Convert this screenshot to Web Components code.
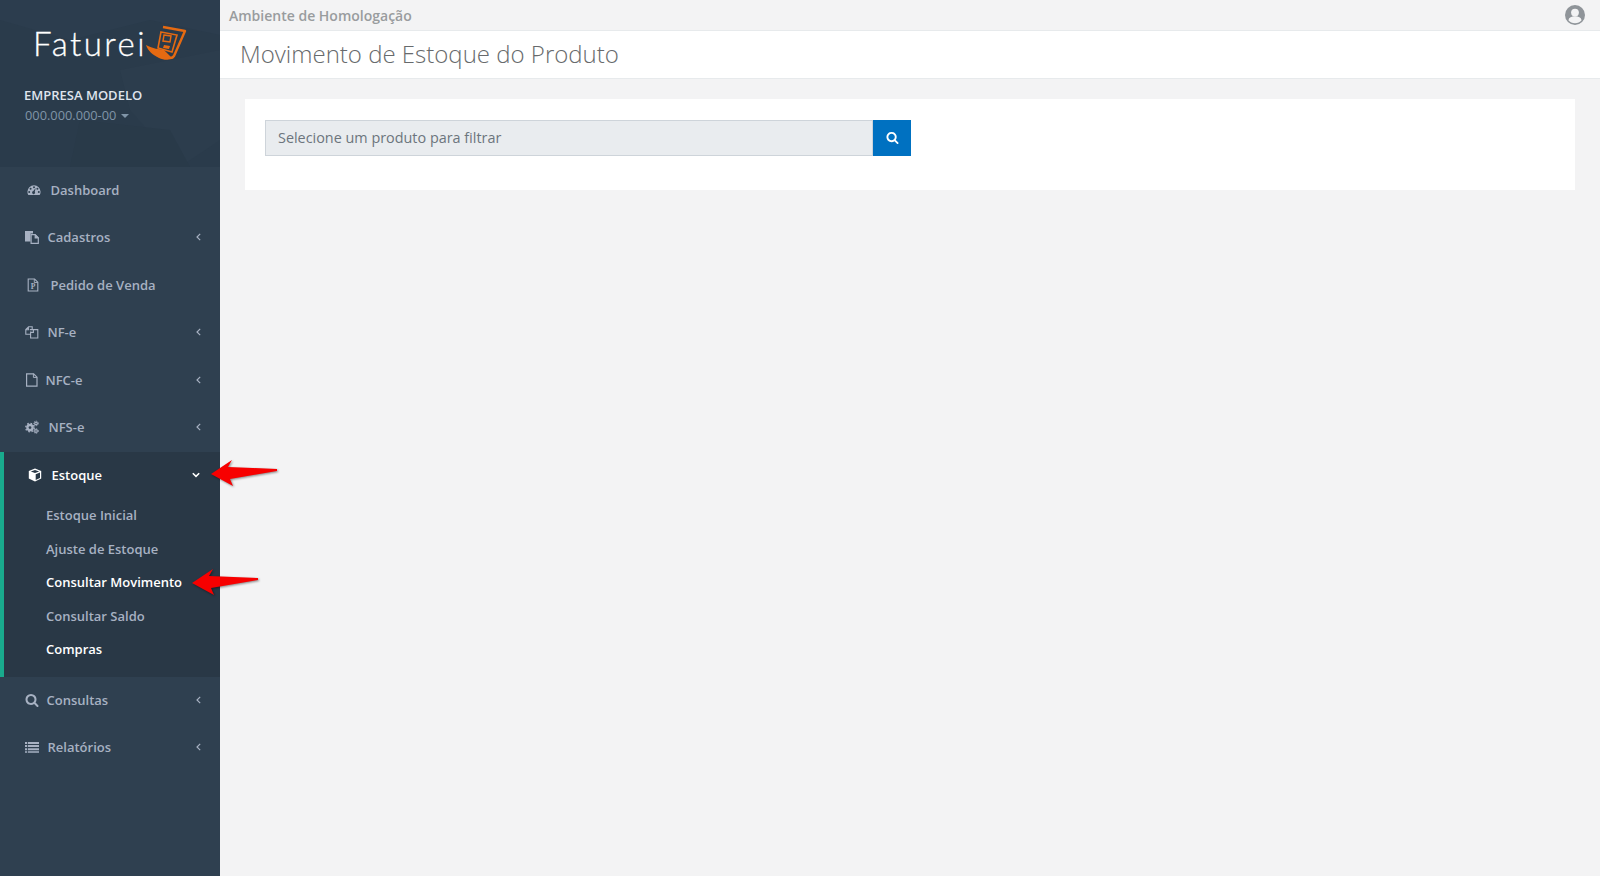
<!DOCTYPE html>
<html lang="pt-BR">
<head>
<meta charset="utf-8">
<title>Movimento de Estoque do Produto</title>
<style>
  html, body { margin: 0; height: 100%; overflow: hidden; background: #f3f3f4; }
  body { font-family: "Open Sans", "Liberation Sans", sans-serif; }
</style>
</head>
<body>
<app-shell>
  <side-bar slot="side">
    <brand-header slot="brand"></brand-header>
    <nav-item icon="dashboard" icon-x="1.5" label-x="25.5">Dashboard</nav-item>
    <nav-item icon="paste" label-x="22.5" arrow>Cadastros</nav-item>
    <nav-item icon="order" icon-x="1" label-x="25.5">Pedido de Venda</nav-item>
    <nav-item icon="files" label-x="22.5" arrow>NF-e</nav-item>
    <nav-item icon="file" label-x="20.5" arrow>NFC-e</nav-item>
    <nav-item icon="cogs" label-x="23.5" arrow>NFS-e</nav-item>
    <nav-group>
      <nav-item slot="head" icon="cube" icon-x="3" label-x="26.5" arrow open>Estoque</nav-item>
      <sub-item>Estoque Inicial</sub-item>
      <sub-item>Ajuste de Estoque</sub-item>
      <sub-item active>Consultar Movimento</sub-item>
      <sub-item>Consultar Saldo</sub-item>
      <sub-item active>Compras</sub-item>
    </nav-group>
    <nav-item icon="search" label-x="21.5" arrow>Consultas</nav-item>
    <nav-item icon="list" label-x="22.5" arrow>Relatórios</nav-item>
  </side-bar>
  <top-bar>Ambiente de Homologação</top-bar>
  <page-heading>Movimento de Estoque do Produto</page-heading>
  <filter-card placeholder="Selecione um produto para filtrar"></filter-card>
  <red-arrow style="left:211px;top:458px"></red-arrow>
  <red-arrow style="left:192px;top:567px"></red-arrow>
</app-shell>

<script>
const SEARCH_PATH = 'M1216 832q0-185-131.5-316.5t-316.5-131.5-316.5 131.5-131.5 316.5 131.5 316.5 316.5 131.5 316.5-131.5 131.5-316.5zm512 832q0 52-38 90t-90 38q-54 0-90-38l-343-342q-179 124-399 124-143 0-273.5-55.5t-225-150-150-225-55.5-273.5 55.5-273.5 150-225 225-150 273.5-55.5 273.5 55.5 225 150 150 225 55.5 273.5q0 220-124 399l343 343q37 37 37 90z';

const ICONS = {
  dashboard: `<svg viewBox="0 0 14 14" width="14" height="14"><path fill="currentColor" fill-rule="evenodd" d="M7 2.2a6.6 6.6 0 0 1 6.6 6.600c0 1.200-.3 2.300-.9 3.200H1.300A6.600 6.600 0 0 1 .4 8.800 6.600 6.600 0 0 1 7 2.200zM7 3.300a1 1 0 1 0 0 2 1 1 0 0 0 0-2zM3.600 4.700a1 1 0 1 0 0 2 1 1 0 0 0 0-2zM2.200 8a1 1 0 1 0 0 2 1 1 0 0 0 0-2zM11.800 8a1 1 0 1 0 0 2 1 1 0 0 0 0-2zM10.400 4.700a1 1 0 1 0 0 2 1 1 0 0 0 0-2zM8.700 4.900 6.300 8.100a1.500 1.500 0 1 0 1.500.6z"/></svg>`,
  paste: `<svg viewBox="0 0 14 14" width="14" height="14"><path fill="currentColor" d="M0 1h8v2.500H5.500v8H0z"/><path fill="none" stroke="currentColor" stroke-width="1.200" d="M6.100 4.600h4l3.200 3.200v5.600H6.100z"/><path fill="currentColor" d="M9.600 4.500h1l3 3v1H9.600z"/></svg>`,
  order: `<svg viewBox="0 0 14 14" width="14" height="14"><path fill="none" stroke="currentColor" stroke-width="1.100" d="M2.200 1h6.400l3.200 3.200v8.800H2.200z"/><path fill="none" stroke="currentColor" stroke-width=".9" d="M8.300 1v3.500h3.500"/><text x="7" y="11.200" text-anchor="middle" font-family="Liberation Serif, serif" font-size="7.500" font-weight="700" fill="currentColor">P</text></svg>`,
  files: `<svg viewBox="0 0 14 14" width="14" height="14"><path fill="none" stroke="currentColor" stroke-width="1.100" d="M5.600 9.300H.8V4.600L3.600 1.800H7.200V4M4.800 4.600H12.800V13H5.600V6.600M3.400 2v2.700H.8M8.400 4.800v2.600H5.700"/></svg>`,
  file: `<svg viewBox="0 0 14 14" width="14" height="14"><path fill="none" stroke="currentColor" stroke-width="1.200" d="M1.600 .8h7l3.400 3.400v9H1.600z"/><path fill="none" stroke="currentColor" stroke-width="1" d="M8.400 .8v3.600h3.600"/></svg>`,
  cogs: `<svg viewBox="0 0 14 14" width="14" height="14"><g fill="none" stroke="currentColor"><circle cx="5" cy="7.600" r="2.600" stroke-width="2.400"/><circle cx="5" cy="7.600" r="4.200" stroke-width="1.500" stroke-dasharray="1.600 1.700"/><circle cx="11" cy="3.400" r="1.300" stroke-width="1.200"/><circle cx="11" cy="3.400" r="2.300" stroke-width="1" stroke-dasharray="1 1"/><circle cx="11" cy="11" r="1.300" stroke-width="1.200"/><circle cx="11" cy="11" r="2.300" stroke-width="1" stroke-dasharray="1 1"/></g></svg>`,
  cube: `<svg viewBox="0 0 14 14" width="14" height="14"><path fill="currentColor" d="M7 .6 13.200 2.900v7.700L7 13.600.8 10.600V2.900z"/><path fill="#293846" d="M7 1.900 2.800 3.400 7 5l4.200-1.600zM7.700 6.200v5.900l4.300-2.200V4.600z"/></svg>`,
  search: `<svg viewBox="0 0 1792 1792" width="14" height="14"><path fill="currentColor" d="${SEARCH_PATH}"/></svg>`,
  list: `<svg viewBox="0 0 14 14" width="14" height="14"><path fill="currentColor" d="M0 2h2.200v2H0zM0 5.100h2.200v2H0zM0 8.200h2.200v2H0zM0 11.200h2.200v1.600H0zM3 2h11v2H3zM3 5.100h11v2H3zM3 8.200h11v2H3zM3 11.200h11v1.600H3z"/></svg>`
};

class AppShell extends HTMLElement {
  constructor() {
    super();
    this.attachShadow({ mode: 'open' });
    this.shadowRoot.innerHTML = `
      <style>
        :host {
          display: grid;
          grid-template-columns: 220px 1fr;
          height: 876px;
          position: relative;
          overflow: hidden;
        }
        .main { display: flex; flex-direction: column; min-width: 0; }
      </style>
      <slot name="side"></slot>
      <div class="main"><slot></slot></div>
    `;
  }
}

class SideBar extends HTMLElement {
  constructor() {
    super();
    this.attachShadow({ mode: 'open' });
    this.shadowRoot.innerHTML = `
      <style>
        :host { display: block; background: #2f4050; height: 100%; }
      </style>
      <slot name="brand"></slot>
      <slot></slot>
    `;
  }
}

class BrandHeader extends HTMLElement {
  constructor() {
    super();
    this.attachShadow({ mode: 'open' });
    this.shadowRoot.innerHTML = `
      <style>
        :host {
          display: block;
          position: relative;
          height: 167px;
          background: #2a3b4b;
          overflow: hidden;
        }
        .facets { position: absolute; inset: 0; }
        .content { position: relative; padding: 24px 0 0 24px; }
        .logo { display: flex; align-items: center; height: 38px; margin-left: 9px; }
        .word {
          font: 300 33px/38px Lato, sans-serif;
          color: #fff;
          letter-spacing: 2.5px;
          -webkit-text-stroke: .3px #fff;
        }
        .mark { margin-left: -2px; flex: none; }
        .company {
          margin-top: 24px;
          font-size: 13px;
          line-height: 18px;
          font-weight: 600;
          color: #dfe4ed;
        }
        .doc {
          display: flex;
          align-items: center;
          margin: 3px 0 0 1px;
          font-size: 12.8px;
          line-height: 17px;
          color: #8095a8;
        }
        .caret {
          width: 0; height: 0;
          margin-left: 5px;
          border: 4px solid transparent;
          border-top-color: #8095a8;
          border-bottom: 0;
        }
      </style>
      <svg class="facets" viewBox="0 0 220 167" width="220" height="167" aria-hidden="true">
        <path fill="#2c3d4e" d="M0 0H220V35L150 20 70 40 0 20z"/>
        <path fill="#2c3d4d" d="M120 70 220 50V140L180 167 130 110z"/>
        <path fill="#293a49" d="M80 120 170 130 190 167H70z"/>
      </svg>
      <div class="content">
        <div class="logo">
          <span class="word">Faturei</span>
          <svg class="mark" viewBox="0 0 42 36" width="42" height="36" aria-hidden="true">
            <path fill="none" stroke="#e56a12" stroke-width="2.400" stroke-linejoin="round" d="M18 2 40 6 29 31q-2 3-6 1.500"/>
            <path fill="none" stroke="#e56a12" stroke-width="1.600" d="M16 7 32 10 27 27 13 23z"/>
            <path fill="none" stroke="#e56a12" stroke-width="1.500" d="M19 10 26 11 25 17 18 16z"/>
            <path fill="#e56a12" d="M19 20 25 21 24 24 18 23z"/>
            <path fill="#e56a12" d="M1 20C8 24 14 24 19 25L26 32C27 35 20 36 14 33 8 30 3 26 1 20z"/>
          </svg>
        </div>
        <div class="company">EMPRESA MODELO</div>
        <div class="doc">000.000.000-00<span class="caret"></span></div>
      </div>
    `;
  }
}

class NavItem extends HTMLElement {
  static get observedAttributes() {
    return ['icon', 'icon-x', 'label-x', 'arrow', 'open'];
  }

  constructor() {
    super();
    this.attachShadow({ mode: 'open' });
  }

  connectedCallback() {
    this.render();
  }

  attributeChangedCallback() {
    this.render();
  }

  render() {
    const labelX = this.getAttribute('label-x') || 26;
    const iconX = this.getAttribute('icon-x') || 0;
    const isOpen = this.hasAttribute('open');
    let chevron = '';
    if (this.hasAttribute('arrow')) {
      chevron = isOpen
        ? '<svg class="chev" width="8" height="6" viewBox="0 0 8 6"><path d="M.8 1.200 4 4.400 7.200 1.200" fill="none" stroke="currentColor" stroke-width="1.600"/></svg>'
        : '<svg class="chev" width="5" height="8" viewBox="0 0 5 8"><path d="M4.200.8 1 4l3.200 3.200" fill="none" stroke="currentColor" stroke-width="1.200"/></svg>';
    }
    this.shadowRoot.innerHTML = `
      <style>
        :host {
          display: flex;
          align-items: center;
          height: 47.4px;
          padding: 0 20px 1.2px 25px;
          box-sizing: border-box;
          font-size: 13px;
          font-weight: 600;
          color: ${isOpen ? '#fff' : '#a7b1c2'};
        }
        .icon { width: ${labelX}px; flex: none; display: flex; align-items: center; padding-left: ${iconX}px; box-sizing: border-box; }
        .label { flex: 1; white-space: nowrap; }
        .chev { flex: none; margin-right: ${isOpen ? 0 : -1}px; }
      </style>
      <span class="icon">${ICONS[this.getAttribute('icon')] || ''}</span>
      <span class="label"><slot></slot></span>
      ${chevron}
    `;
  }
}

class NavGroup extends HTMLElement {
  constructor() {
    super();
    this.attachShadow({ mode: 'open' });
    this.shadowRoot.innerHTML = `
      <style>
        :host {
          display: block;
          height: 225px;
          margin-top: .6px;
          box-sizing: border-box;
          background: #293846;
          border-left: 4px solid #19aa8d;
        }
        .head { margin: 0 0 -.6px -4px; display: block; }
        .subs { display: block; }
      </style>
      <div class="head"><slot name="head"></slot></div>
      <div class="subs"><slot></slot></div>
    `;
  }
}

class SubItem extends HTMLElement {
  constructor() {
    super();
    this.attachShadow({ mode: 'open' });
    this.shadowRoot.innerHTML = `
      <style>
        :host {
          display: flex;
          align-items: center;
          height: 33.5px;
          padding-left: 42px;
          font-size: 13px;
          font-weight: 600;
          white-space: nowrap;
          color: #a7b1c2;
        }
        :host([active]) { color: #fff; }
      </style>
      <slot></slot>
    `;
  }
}

class TopBar extends HTMLElement {
  constructor() {
    super();
    this.attachShadow({ mode: 'open' });
    this.shadowRoot.innerHTML = `
      <style>
        :host {
          display: flex;
          align-items: center;
          justify-content: space-between;
          box-sizing: border-box;
          height: 31px;
          padding: 0 15px 0 9px;
          border-bottom: 1px solid #e7eaec;
          background: #f3f3f4;
          color: #999c9e;
          font-size: 14px;
          font-weight: 600;
        }
        svg { display: block; }
      </style>
      <span><slot></slot></span>
      <svg width="20" height="20" viewBox="0 0 20 20" aria-hidden="true">
        <circle cx="10" cy="10" r="10" fill="#8f9499"/>
        <circle cx="10" cy="7.600" r="3.900" fill="#f3f3f4"/>
        <path fill="#f3f3f4" d="M3.400 15.200c.6-2.800 3-3.900 6.600-3.900s6 1.100 6.600 3.900c-1.500 1.900-3.900 3-6.600 3s-5.100-1.100-6.600-3z"/>
      </svg>
    `;
  }
}

class PageHeading extends HTMLElement {
  constructor() {
    super();
    this.attachShadow({ mode: 'open' });
    this.shadowRoot.innerHTML = `
      <style>
        :host {
          display: flex;
          align-items: center;
          box-sizing: border-box;
          height: 48px;
          padding: 0 0 2px 20px;
          background: #fff;
          border-bottom: 1px solid #e7eaec;
        }
        h2 {
          margin: 0;
          font-size: 24px;
          font-weight: 300;
          color: #676a6c;
        }
      </style>
      <h2><slot></slot></h2>
    `;
  }
}

class FilterCard extends HTMLElement {
  constructor() {
    super();
    this.attachShadow({ mode: 'open' });
    this.shadowRoot.innerHTML = `
      <style>
        :host {
          display: block;
          box-sizing: border-box;
          height: 91px;
          margin: 20px 25px 0;
          padding: 21px 20px;
          background: #fff;
        }
        .group { display: flex; width: 646px; height: 36px; }
        input {
          flex: 1;
          min-width: 0;
          box-sizing: border-box;
          height: 36px;
          padding: 0 12px 2px;
          border: 1px solid #ced4da;
          border-radius: 0;
          background: #e9ecef;
          font: 400 14.4px "Open Sans", sans-serif;
          color: #495057;
          outline: 0;
        }
        input::placeholder { color: #6c757d; opacity: 1; }
        button {
          flex: none;
          width: 38px;
          height: 36px;
          padding: 0 0 1px;
          border: 0;
          background: #0071c1;
          color: #fff;
          display: flex;
          align-items: center;
          justify-content: center;
        }
      </style>
      <div class="group">
        <input type="text" readonly placeholder="${this.getAttribute('placeholder') || ''}">
        <button type="button" aria-label="Buscar">
          <svg viewBox="0 0 1792 1792" width="13" height="13"><path fill="currentColor" d="${SEARCH_PATH}"/></svg>
        </button>
      </div>
    `;
  }
}

// Seta vermelha sobreposta a captura, fica por cima do menu.
class RedArrow extends HTMLElement {
  constructor() {
    super();
    this.attachShadow({ mode: 'open' });
    this.shadowRoot.innerHTML = `
      <style>
        :host { position: absolute; display: block; width: 70px; height: 32px; }
        svg { display: block; overflow: visible; filter: drop-shadow(1px 1px 1px rgba(0,0,0,.45)); }
      </style>
      <svg width="70" height="32" viewBox="0 0 70 32" aria-hidden="true">
        <polygon fill="#f70000" points="0,16 21,2 17,9 66,11 66,13 19,21 22,28"/>
      </svg>
    `;
  }
}

customElements.define('app-shell', AppShell);
customElements.define('side-bar', SideBar);
customElements.define('brand-header', BrandHeader);
customElements.define('nav-item', NavItem);
customElements.define('nav-group', NavGroup);
customElements.define('sub-item', SubItem);
customElements.define('top-bar', TopBar);
customElements.define('page-heading', PageHeading);
customElements.define('filter-card', FilterCard);
customElements.define('red-arrow', RedArrow);
</script>
</body>
</html>
